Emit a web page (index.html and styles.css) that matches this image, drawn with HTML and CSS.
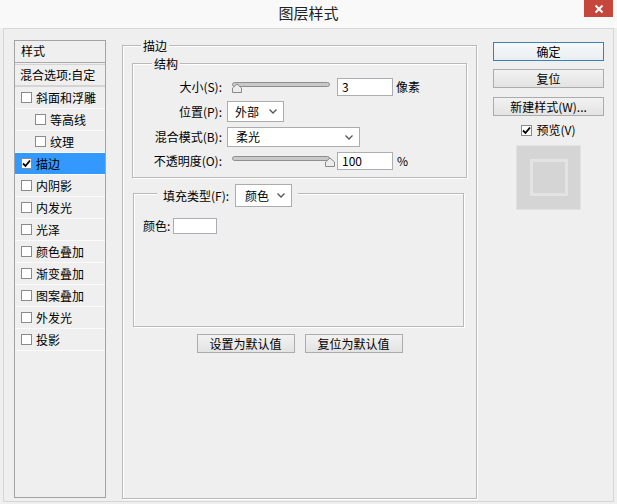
FILE: index.html
```html
<!DOCTYPE html>
<html lang="zh-CN">
<head>
<meta charset="utf-8">
<title>图层样式</title>
<link rel="stylesheet" href="styles.css">
</head>
<body>
<div class="titlebar">
  <span></span>
  <div class="title">图层样式</div>
  <div class="close"><svg width="10" height="10" viewBox="0 0 10 10"><path d="M1.5 1.5 L8.5 8.5 M8.5 1.5 L1.5 8.5" stroke="#fff" stroke-width="2" fill="none"/></svg></div>
</div>
<div class="frame">
  <div class="stylelist">
    <div class="head">样式</div>
    <div class="blend">混合选项:自定</div>
    <div class="item"><span class="cb"></span>斜面和浮雕</div>
    <div class="item sub"><span class="cb"></span>等高线</div>
    <div class="item sub"><span class="cb"></span>纹理</div>
    <div class="item on"><span class="cb"><svg width="9" height="9" viewBox="0 0 9 9"><path d="M1 4.5 L3.5 7 L8 1.5" stroke="#000" stroke-width="1.8" fill="none"/></svg></span>描边</div>
    <div class="item"><span class="cb"></span>内阴影</div>
    <div class="item"><span class="cb"></span>内发光</div>
    <div class="item"><span class="cb"></span>光泽</div>
    <div class="item"><span class="cb"></span>颜色叠加</div>
    <div class="item"><span class="cb"></span>渐变叠加</div>
    <div class="item"><span class="cb"></span>图案叠加</div>
    <div class="item"><span class="cb"></span>外发光</div>
    <div class="item"><span class="cb"></span>投影</div>
  </div>

  <div class="group maingroup">
    <div class="legend main-legend">描边</div>
    <div class="group struct">
      <div class="legend struct-legend">结构</div>
      <div class="form">
        <div class="lbl">大小(S):</div>
        <div class="ctrl">
          <svg class="slider" width="98" height="18" viewBox="0 0 98 18"><rect x="0.5" y="4.5" width="97" height="4" rx="2" fill="#c9c9c9" stroke="#8f8f8f"/><path d="M0.5 14.5 V10 L5 6 L9.5 10 V14.5 Z" fill="#ececec" stroke="#8a8a8a"/></svg>
          <span class="field">3</span><span class="unit">像素</span>
        </div>
        <div class="lbl">位置(P):</div>
        <div class="ctrl">
          <span class="select sel-pos">外部<svg class="chev" width="8" height="5" viewBox="0 0 8 5"><path d="M0.5 0.5 L4 4 L7.5 0.5" stroke="#555" stroke-width="1.3" fill="none"/></svg></span>
        </div>
        <div class="lbl">混合模式(B):</div>
        <div class="ctrl">
          <span class="select sel-mode">柔光<svg class="chev" width="8" height="5" viewBox="0 0 8 5"><path d="M0.5 0.5 L4 4 L7.5 0.5" stroke="#555" stroke-width="1.3" fill="none"/></svg></span>
        </div>
        <div class="lbl">不透明度(O):</div>
        <div class="ctrl">
          <svg class="slider" width="98" height="18" viewBox="0 0 98 18"><rect x="0.5" y="4.5" width="97" height="4" rx="2" fill="#c9c9c9" stroke="#8f8f8f"/><path d="M93.5 14.5 V10 L98 6 L102.5 10 V14.5 Z" fill="#ececec" stroke="#8a8a8a"/></svg>
          <span class="field">100</span><span class="unit pct">%</span>
        </div>
      </div>
    </div>

    <div class="group fill">
      <div class="legend fill-legend">
        <span>填充类型(F):</span>
        <span class="select sel-fill">颜色<svg class="chev" width="8" height="5" viewBox="0 0 8 5"><path d="M0.5 0.5 L4 4 L7.5 0.5" stroke="#555" stroke-width="1.3" fill="none"/></svg></span>
      </div>
      <div class="color-row"><span>颜色:</span><span class="swatch"></span></div>
    </div>

    <div class="btnrow">
      <div class="btn wide">设置为默认值</div>
      <div class="btn wide">复位为默认值</div>
    </div>
  </div>

  <div class="side">
    <div class="btn side-btn default">确定</div>
    <div class="btn side-btn reset">复位</div>
    <div class="btn side-btn">新建样式(W)...</div>
    <div class="preview-check"><span class="cb"><svg width="9" height="9" viewBox="0 0 9 9"><path d="M1 4.5 L3.5 7 L8 1.5" stroke="#000" stroke-width="1.8" fill="none"/></svg></span>预览(V)</div>
    <div class="preview"><div class="preview-inner"></div></div>
  </div>
</div>
</body>
</html>
```
FILE: styles.css
```css
* { box-sizing: border-box; }

body {
  margin: 0;
  width: 617px;
  height: 504px;
  overflow: hidden;
  background: #efefef;
  font: 12px/1 "Noto Sans CJK SC", "Liberation Sans", sans-serif;
  color: #000;
}

.titlebar {
  height: 28px;
  display: grid;
  grid-template-columns: 1fr auto 1fr;
  align-items: start;
  background: #f9f9f9;
}

.title {
  font-size: 15px;
  line-height: 25px;
  color: #222;
}

.close {
  justify-self: end;
  margin-right: 4px;
  width: 29px;
  height: 17px;
  background: #c7463c;
  display: flex;
  align-items: center;
  justify-content: center;
}

.frame {
  margin: 0 3px;
  height: 474px;
  border: 1px solid #d6d6d6;
  display: flex;
  align-items: flex-start;
  padding: 11px 0 0 10px;
}

/* left style list */
.stylelist {
  width: 92px;
  height: 458px;
  border: 1px solid #a3a3a3;
  background: #efefef;
  display: flex;
  flex-direction: column;
}

.head {
  height: 22px;
  line-height: 20px;
  padding-left: 6px;
  border-bottom: 1px solid #a9a9a9;
}

.blend {
  margin-top: 1px;
  height: 23px;
  line-height: 20px;
  padding-left: 5px;
  border-top: 1px solid #d4d4d4;
  border-bottom: 2px solid #d4d4d4;
}

.item {
  height: 22px;
  display: flex;
  align-items: center;
  gap: 4px;
  padding-left: 6px;
  border-bottom: 1px solid #fbfbfb;
}

.item.sub { padding-left: 20px; }

.item.on { background: #3399ff; }

.cb {
  width: 11px;
  height: 11px;
  border: 1px solid #8a8a8a;
  background: #fff;
  display: inline-flex;
  align-items: center;
  justify-content: center;
  flex: none;
}

/* group boxes */
.group {
  border: 1px solid #b9b9b9;
  box-shadow: inset 1px 1px 0 #fff, 1px 1px 0 #fff;
  display: flex;
  flex-direction: column;
  align-items: flex-start;
}

.legend {
  background: #efefef;
  line-height: 17px;
  padding: 0 2px;
  margin-top: -9px;
}

.maingroup {
  margin-left: 16px;
  margin-top: 5px;
  width: 355px;
  height: 454px;
}

.main-legend { margin-left: 18px; }

.struct {
  margin-top: 9px;
  margin-left: 9px;
  width: 335px;
  height: 115px;
}

.struct-legend { margin-left: 19px; }

.form {
  margin-top: 6px;
  display: grid;
  grid-template-columns: 89px auto;
  grid-template-rows: 18px 21px 20px 18px;
  column-gap: 5px;
  row-gap: 5px;
}

.lbl {
  text-align: right;
  align-self: center;
  white-space: nowrap;
}

.ctrl {
  display: flex;
  align-items: center;
}

.slider {
  margin-left: 5px;
  overflow: visible;
}

.field {
  margin-left: 7px;
  width: 56px;
  height: 18px;
  border: 1px solid #abadb3;
  background: #fff;
  padding-left: 4px;
  line-height: 16px;
}

.unit { margin-left: 3px; }
.unit.pct { margin-left: 4px; }

.select {
  height: 100%;
  border: 1px solid #acacac;
  background: #fff;
  display: flex;
  align-items: center;
  justify-content: space-between;
  padding: 0 6px 0 7px;
}

.sel-pos { width: 57px; }
.sel-mode { width: 133px; padding-left: 8px; }

/* fill group */
.fill {
  margin-top: 15px;
  margin-left: 10px;
  width: 331px;
  height: 134px;
}

.fill-legend {
  margin-top: -10px;
  margin-left: 23px;
  padding: 0 6px;
  height: 23px;
  display: flex;
  align-items: center;
  gap: 6px;
}

.sel-fill {
  width: 57px;
  height: 23px;
  padding-left: 9px;
}

.color-row {
  margin-top: 11px;
  padding-left: 9px;
  display: flex;
  align-items: center;
  gap: 3px;
}

.swatch {
  width: 44px;
  height: 16px;
  border: 1px solid #abadb3;
  background: #fff;
}

.btnrow {
  align-self: stretch;
  margin-top: 7px;
  display: flex;
  justify-content: center;
  gap: 10px;
}

.btn {
  height: 19px;
  border: 1px solid #acacac;
  background: linear-gradient(#f2f2f2, #e3e3e3);
  display: flex;
  align-items: center;
  justify-content: center;
}

.btn.wide { width: 98px; }

/* right column */
.side {
  margin-left: 16px;
  margin-top: 2px;
  width: 111px;
  display: flex;
  flex-direction: column;
  align-items: center;
}

.side-btn { width: 111px; }
.side-btn.default {
  border-color: #3c7fb1;
  background: linear-gradient(#f6f8fa, #e9eef2);
  margin-bottom: 8px;
}
.side-btn.reset { margin-bottom: 9px; }

.preview-check {
  margin-top: 7px;
  height: 14px;
  display: flex;
  align-items: center;
  gap: 4px;
}

.preview {
  margin-top: 8px;
  width: 65px;
  height: 65px;
  background: #d5d5d5;
  border: 1px solid #e2e2e2;
  display: flex;
  align-items: center;
  justify-content: center;
}

.preview-inner {
  width: 38px;
  height: 37px;
  border: 3px solid #e3e3e3;
}
```
